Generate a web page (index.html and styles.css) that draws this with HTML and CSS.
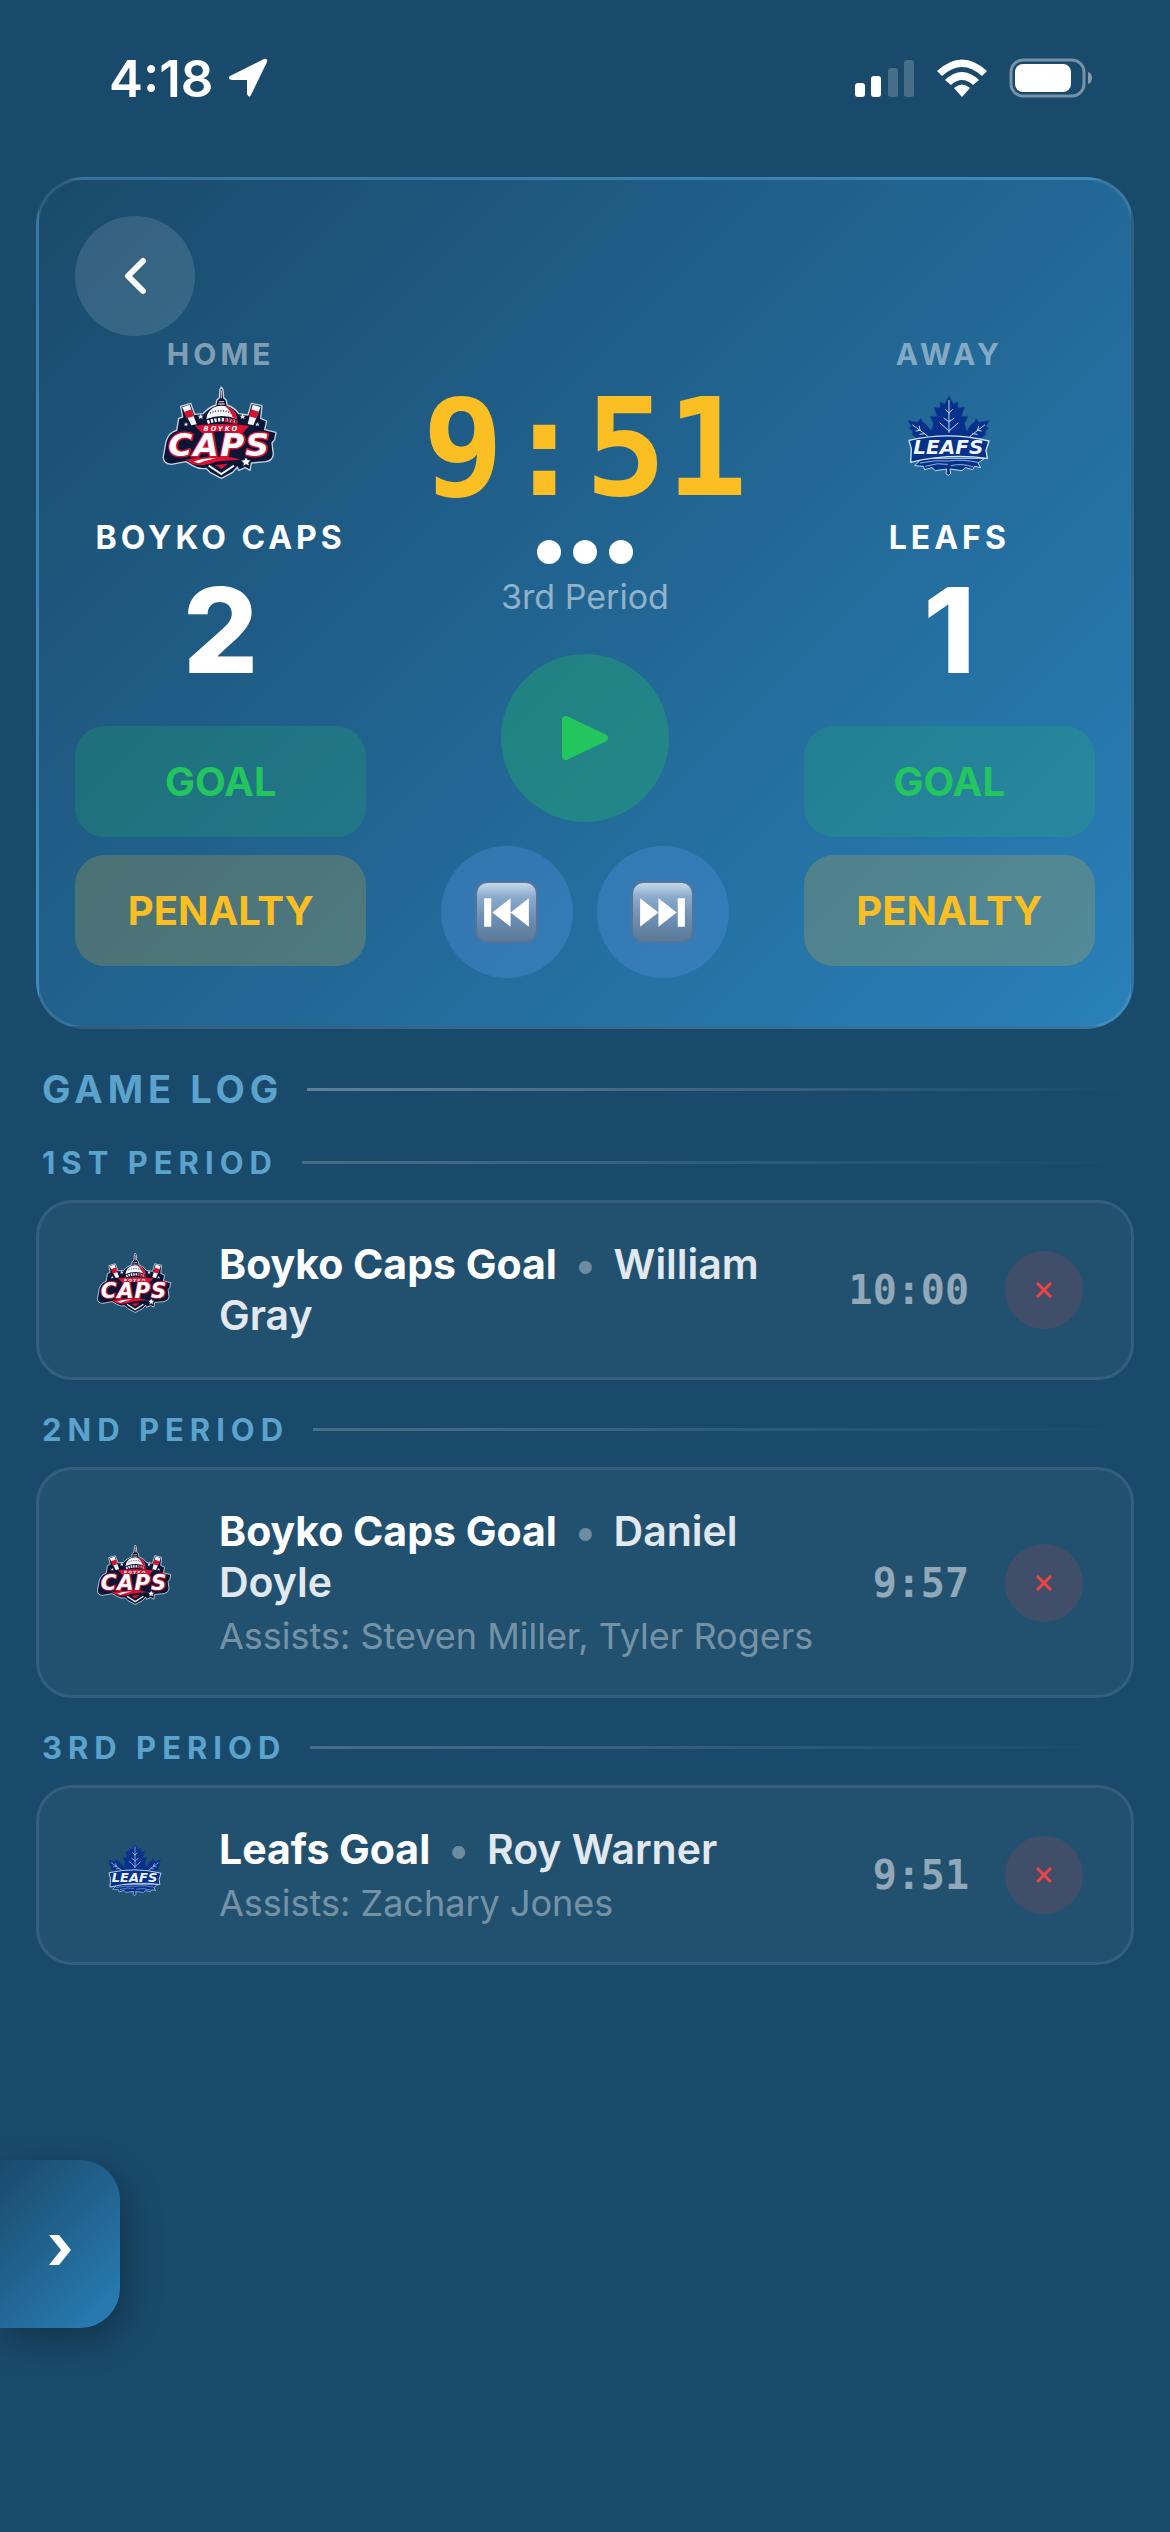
FILE: index.html
```html
<!DOCTYPE html>
<html lang="en">
<head>
    <meta charset="UTF-8">
    <meta name="viewport" content="width=device-width, initial-scale=1.0">
    <title>Hockey Scoreboard</title>
    <link rel="stylesheet" href="styles.css">
</head>
<body>
    <!-- Team logos, reused in the scoreboard and in the log -->
    <svg class="sprites" aria-hidden="true">
        <symbol id="logo-caps" viewBox="61 6 360 360">
            <path d="M242 48 L247 56 L249 80 L257 88 L259 102 Q282 110 294 128 L322 132 L332 97 L364 104 L360 142 L378 150 L372 176 L406 184 L402 206 L394 216 L398 250 Q396 268 376 272 L332 276 L328 298 L314 290 L294 298 L290 288 L276 304 L242 322 L208 304 L196 292 Q176 296 156 284 L136 272 L92 280 Q66 278 68 256 L76 212 Q84 184 108 178 L114 142 L126 138 L120 106 L150 97 L162 130 L188 128 Q202 110 226 102 L228 88 L236 80 L238 56 Z" fill="#0a1536" stroke="#c9d3e0" stroke-width="4" stroke-linejoin="round"/>
            <!-- sticks -->
            <path d="M124 109 L147 101 L168 160 L152 163 Z M336 101 L360 108 L338 163 L321 159 Z" fill="#f4f6fa"/>
            <path d="M130 123 L152 115 L159 136 L138 142 Z M331 115 L355 122 L347 142 L325 136 Z" fill="#d6122c"/>
            <path d="M180 128 l3 6 6 0 -5 4 2 6 -6 -3 -6 3 2 -6 -5 -4 6 0 Z M306 128 l3 6 6 0 -5 4 2 6 -6 -3 -6 3 2 -6 -5 -4 6 0 Z M136 153 l2 5 5 0 -4 3 2 5 -5 -3 -5 3 2 -5 -4 -3 5 0 Z M350 153 l2 5 5 0 -4 3 2 5 -5 -3 -5 3 2 -5 -4 -3 5 0 Z" fill="#dfe6f0"/>
            <!-- dome -->
            <path d="M240 58 h4 v24 h-4 Z M234 90 h16 v4 h-16 Z M232 97 h20 v4 h-20 Z" fill="#d8a8b4"/>
            <path d="M197 144 Q202 106 242 104 Q282 106 289 144 Q244 126 197 144 Z" fill="#f7f8fb"/>
            <path d="M252 105 Q284 110 290 145 L276 139 Q270 118 252 105 Z" fill="#e0142d"/>
            <path d="M208 126 Q242 112 278 128" fill="none" stroke="#39425f" stroke-width="5" stroke-dasharray="3 5"/>
            <path d="M200 154 Q243 138 288 154" fill="none" stroke="#f4f6fa" stroke-width="11" stroke-dasharray="7 4"/>
            <path d="M252 147 Q272 148 290 156" fill="none" stroke="#e0142d" stroke-width="11" stroke-dasharray="7 4"/>
            <!-- red banner -->
            <path d="M162 164 Q242 154 326 164 L306 186 Q242 176 184 186 Z" fill="#dc1030"/>
            <text class="logo-text" x="242" y="180" font-size="20" letter-spacing="6" text-anchor="middle" fill="#fff">BOYKO</text>
            <path d="M136 266 Q180 256 222 258 Q270 254 300 266 Q260 268 226 272 Q196 284 172 282 Q150 280 136 266 Z" fill="#dc1030"/>
            <path d="M158 272 Q190 260 226 262 Q196 268 174 277 Z" fill="#fff"/>
            <path d="M204 284 L242 309 L280 284" fill="none" stroke="#e9edf4" stroke-width="6"/>
            <path d="M224 282 L262 278 L242 294 Z" fill="#dc1030"/>
            <text class="logo-text" x="236" y="254" font-size="98" letter-spacing="4" text-anchor="middle" fill="#fbfcfe" stroke="#dc1030" stroke-width="9" stroke-linejoin="round" paint-order="stroke">CAPS</text>
            <path d="M316 256 l5 10 11 1 -8 8 3 11 -11 -5 -10 6 2 -11 -8 -8 11 -2 Z" fill="#fff" stroke="#0a1536" stroke-width="3"/>
        </symbol>

        <symbol id="logo-leafs" viewBox="31 6 360 360">
            <path d="M211 74 L224 98 L238 92 L238 110 L258 108 L248 136 L268 136 L258 158 L264 180 L276 162 L290 150 L292 142 L302 154 L332 148 L322 166 L330 172 L320 180 L322 190 L310 200 L112 200 L100 190 L102 180 L90 172 L98 166 L87 148 L116 154 L126 142 L130 150 L144 162 L158 178 L164 158 L154 136 L174 136 L166 108 L184 110 L184 92 L198 98 Z" fill="#05318a" stroke="#174f92" stroke-width="2"/>
            <g fill="none" stroke="#bfd4ef" stroke-width="3" stroke-linecap="round">
                <path d="M211 88 V184 M211 126 L201 116 M211 126 L221 116 M211 152 L196 142 M211 152 L226 142 M211 180 L184 156 M211 180 L238 156"/>
                <path d="M102 162 L148 196 M124 178 L112 180 M124 178 L122 166 M138 188 L124 190"/>
                <path d="M318 162 L274 196 M296 178 L308 180 M296 178 L300 166 M282 188 L296 190"/>
            </g>
            <path d="M98 262 L122 270 L108 284 L134 286 L138 296 L160 290 L170 299 L204 294 L202 308 L209 313 L216 308 L214 294 L250 299 L260 290 L282 296 L288 286 L306 290 L298 276 L318 262 Z" fill="#05318a" stroke="#c5d7ee" stroke-width="3" stroke-linejoin="round"/>
            <path d="M91 208 Q211 180 331 210 L322 238 L326 262 Q211 246 96 274 L98 234 Z" fill="#05318a" stroke="#d7e4f5" stroke-width="4" stroke-linejoin="round"/>
            <path d="M124 276 Q170 266 210 270 Q250 264 298 274 M140 286 Q176 274 208 280 M216 284 Q250 276 284 288" fill="none" stroke="#8fb4de" stroke-width="3"/>
            <text class="logo-text" x="209" y="249" font-size="60" text-anchor="middle" fill="#f3f8fe">LEAFS</text>
        </symbol>

        <symbol id="icon-delete" viewBox="0 0 16 16">
            <path d="M1 1 L15 15 M15 1 L1 15" fill="none" stroke="#ef4444" stroke-width="3"/>
        </symbol>
    </svg>

    <header class="status-bar">
        <div class="status-left">
            <span class="status-time">4:18</span>
            <svg class="location-icon" viewBox="0 0 40 40">
                <path d="M36 1 Q40 0 39 4 L23 37 Q21 41 19 36 L19 22 L4 22 Q-1 21 2 18 Z" fill="#fff"/>
            </svg>
        </div>
        <div class="status-right">
            <svg class="signal-icon" viewBox="0 0 60 38">
                <rect x="0" y="24" width="10" height="14" rx="3" fill="#fff"/>
                <rect x="16" y="17" width="10" height="21" rx="3" fill="#fff"/>
                <rect x="33" y="9" width="10" height="29" rx="3" fill="#fff" opacity="0.2"/>
                <rect x="49" y="1" width="10" height="37" rx="3" fill="#fff" opacity="0.2"/>
            </svg>
            <svg class="wifi-icon" viewBox="0 0 52 38">
                <path d="M1 12 Q26 -11 51 12 L46 17 Q26 -1 6 17 Z" fill="#fff"/>
                <path d="M9 21 Q26 5 43 21 L37 26 Q26 16 15 26 Z" fill="#fff"/>
                <path d="M18 29 Q26 22 34 29 L26 38 Z" fill="#fff"/>
            </svg>
            <svg class="battery-icon" viewBox="0 0 83 40">
                <rect x="2" y="2" width="73" height="36" rx="12" fill="none" stroke="#fff" stroke-width="3" opacity="0.4"/>
                <rect x="6" y="6" width="56" height="28" rx="8" fill="#fff"/>
                <path d="M79 14 Q83 15 83 20 Q83 25 79 26 Z" fill="#fff" opacity="0.45"/>
            </svg>
        </div>
    </header>

    <main class="game">
        <section class="scoreboard">
            <button class="back-btn" aria-label="Back">
                <svg viewBox="0 0 24 38"><path d="M20 4 L5 19 L20 34" fill="none" stroke="#fff" stroke-width="6" stroke-linecap="round" stroke-linejoin="round"/></svg>
            </button>

            <div class="board">
                <div class="team">
                    <div class="side">HOME</div>
                    <svg class="team-logo"><use href="#logo-caps"/></svg>
                    <div class="team-name">BOYKO CAPS</div>
                    <div class="score">2</div>
                    <div class="actions">
                        <button class="action-btn goal">GOAL</button>
                        <button class="action-btn penalty">PENALTY</button>
                    </div>
                </div>

                <div class="center">
                    <div class="clock">9:51</div>
                    <div class="dots"><span class="dot"></span><span class="dot"></span><span class="dot"></span></div>
                    <div class="period">3rd Period</div>
                    <button class="play-btn" aria-label="Start clock">
                        <svg viewBox="0 0 46 44"><path d="M4 4 L42 22 L4 40 Z" fill="#22c55e" stroke="#22c55e" stroke-width="8" stroke-linejoin="round"/></svg>
                    </button>
                    <div class="skip">
                        <button class="skip-btn" aria-label="Previous period">
                            <svg viewBox="0 0 62 61">
                                <linearGradient id="key-face" x1="0" y1="0" x2="0" y2="1">
                                    <stop offset="0" stop-color="#c9dcec"/>
                                    <stop offset="0.25" stop-color="#8aabcc"/>
                                    <stop offset="0.6" stop-color="#6c8fb4"/>
                                    <stop offset="1" stop-color="#5c7896"/>
                                </linearGradient>
                                <rect x="1" y="1" width="60" height="59" rx="11" fill="url(#key-face)" stroke="#54749a" stroke-width="2"/>
                                <path d="M9 17 h7 v28 h-7 Z M17 31 L35 17 V45 Z M35 31 L53 17 V45 Z" fill="#fff"/>
                            </svg>
                        </button>
                        <button class="skip-btn" aria-label="Next period">
                            <svg viewBox="0 0 62 61">
                                <rect x="1" y="1" width="60" height="59" rx="11" fill="url(#key-face)" stroke="#54749a" stroke-width="2"/>
                                <path d="M9 17 L27 31 L9 45 Z M27 17 L45 31 L27 45 Z M46 17 h7 v28 h-7 Z" fill="#fff"/>
                            </svg>
                        </button>
                    </div>
                </div>

                <div class="team">
                    <div class="side">AWAY</div>
                    <svg class="team-logo"><use href="#logo-leafs"/></svg>
                    <div class="team-name">LEAFS</div>
                    <div class="score">1</div>
                    <div class="actions">
                        <button class="action-btn goal">GOAL</button>
                        <button class="action-btn penalty">PENALTY</button>
                    </div>
                </div>
            </div>
        </section>

        <section class="log">
            <h2 class="log-title">GAME LOG</h2>

            <h3 class="period-title">1ST PERIOD</h3>
            <article class="event">
                <svg class="event-logo"><use href="#logo-caps"/></svg>
                <div class="event-text">
                    <div class="event-main"><strong>Boyko Caps Goal</strong><span class="sep">•</span>William Gray</div>
                </div>
                <time class="event-time">10:00</time>
                <button class="delete-btn" aria-label="Delete event"><svg><use href="#icon-delete"/></svg></button>
            </article>

            <h3 class="period-title">2ND PERIOD</h3>
            <article class="event">
                <svg class="event-logo"><use href="#logo-caps"/></svg>
                <div class="event-text">
                    <div class="event-main"><strong>Boyko Caps Goal</strong><span class="sep">•</span>Daniel Doyle</div>
                    <div class="assists">Assists: Steven Miller, Tyler Rogers</div>
                </div>
                <time class="event-time">9:57</time>
                <button class="delete-btn" aria-label="Delete event"><svg><use href="#icon-delete"/></svg></button>
            </article>

            <h3 class="period-title">3RD PERIOD</h3>
            <article class="event">
                <svg class="event-logo"><use href="#logo-leafs"/></svg>
                <div class="event-text">
                    <div class="event-main"><strong>Leafs Goal</strong><span class="sep">•</span>Roy Warner</div>
                    <div class="assists">Assists: Zachary Jones</div>
                </div>
                <time class="event-time">9:51</time>
                <button class="delete-btn" aria-label="Delete event"><svg><use href="#icon-delete"/></svg></button>
            </article>
        </section>
    </main>

    <button class="drawer-tab" aria-label="Open menu">
        <svg viewBox="0 0 22 30"><path d="M0 0 H10 L22 15 L10 30 H0 L12 15 Z" fill="#fff"/></svg>
    </button>
</body>
</html>
```
FILE: styles.css
```css
* {
    box-sizing: border-box;
}
body {
    margin: 0;
    min-height: 100vh;
    background: #1a4a6b;
    color: white;
    font-family: Inter, "Liberation Sans", sans-serif;
}
button {
    border: none;
    padding: 0;
    color: inherit;
    font-family: inherit;
    cursor: pointer;
}
.sprites {
    display: none;
}
.logo-text {
    font-family: "DejaVu Sans", sans-serif;
    font-weight: 700;
    font-style: italic;
}

/* Status bar */
.status-bar {
    display: flex;
    justify-content: space-between;
    align-items: center;
    height: 156px;
    padding: 0 78px 0 109px;
}
.status-left,
.status-right {
    display: flex;
    align-items: center;
}
.status-left {
    gap: 15px;
}
.status-right {
    gap: 21px;
}
.status-time {
    font-size: 51px;
    font-weight: 600;
}
.location-icon {
    width: 40px;
    height: 40px;
}
.signal-icon {
    width: 60px;
    height: 38px;
}
.wifi-icon {
    width: 52px;
    height: 38px;
}
.battery-icon {
    width: 83px;
    height: 40px;
}

.game {
    padding: 21px 36px;
}

/* Scoreboard */
.scoreboard {
    padding: 36px 36px 48px;
    border: 3px solid rgba(255, 255, 255, 0.1);
    border-radius: 48px;
    background: linear-gradient(135deg, #1a4a6b, #2980b9);
}
.back-btn {
    display: flex;
    align-items: center;
    justify-content: center;
    width: 120px;
    height: 120px;
    border-radius: 50%;
    background: rgba(255, 255, 255, 0.12);
}
.back-btn svg {
    width: 24px;
    height: 38px;
}
.board {
    display: grid;
    grid-template-columns: 2fr 3fr 2fr;
}
.team,
.center {
    display: flex;
    flex-direction: column;
    align-items: center;
}
.side {
    font-size: 30px;
    font-weight: 700;
    line-height: 37px;
    letter-spacing: 4px;
    color: rgba(255, 255, 255, 0.45);
}
.team-logo {
    width: 120px;
    height: 120px;
}
.team-name {
    margin-top: 23px;
    font-size: 32px;
    font-weight: 700;
    line-height: 44px;
    letter-spacing: 4px;
    white-space: nowrap;
}
.score {
    margin-top: 10px;
    font-size: 118px;
    font-weight: 800;
    line-height: 120px;
}
.actions {
    display: flex;
    flex-direction: column;
    gap: 18px;
    width: 100%;
    margin-top: 36px;
}
.action-btn {
    height: 111px;
    border-radius: 30px;
    font-size: 40px;
    font-weight: 700;
}
.goal {
    background: rgba(34, 197, 94, 0.2);
    color: #22c55e;
}
.penalty {
    background: rgba(251, 191, 36, 0.2);
    color: #fbbf24;
}
.clock {
    margin-top: 44px;
    font-family: "DejaVu Sans Mono", "Liberation Mono", monospace;
    font-size: 135px;
    font-weight: 700;
    line-height: 138px;
    color: #fbbf24;
}
.dots {
    display: flex;
    gap: 12px;
    margin-top: 22px;
}
.dot {
    width: 24px;
    height: 24px;
    border-radius: 50%;
    background: white;
}
.period {
    margin-top: 12px;
    font-size: 34px;
    line-height: 42px;
    color: rgba(255, 255, 255, 0.5);
}
.play-btn {
    display: flex;
    align-items: center;
    justify-content: center;
    width: 168px;
    height: 168px;
    margin-top: 36px;
    border-radius: 50%;
    background: rgba(34, 197, 94, 0.3);
}
.play-btn svg {
    width: 46px;
    height: 44px;
}
.skip {
    display: flex;
    gap: 24px;
    margin-top: 24px;
}
.skip-btn {
    display: flex;
    align-items: center;
    justify-content: center;
    width: 132px;
    height: 132px;
    border-radius: 50%;
    background: rgba(82, 146, 224, 0.35);
}
.skip-btn svg {
    width: 63px;
    height: 62px;
}

/* Game log */
.log-title,
.period-title {
    display: flex;
    align-items: center;
    gap: 24px;
    padding: 0 6px;
    font-weight: 700;
    color: #5ba3cc;
}
.log-title {
    margin: 36px 0 30px;
    font-size: 38px;
    line-height: 48px;
    letter-spacing: 5px;
}
.period-title {
    margin: 30px 0 18px;
    font-size: 31px;
    line-height: 39px;
    letter-spacing: 6px;
}
.log-title::after,
.period-title::after {
    content: "";
    flex: 1;
    height: 3px;
    background: linear-gradient(90deg, rgba(255, 255, 255, 0.2), transparent);
}
.log-title::after {
    background: linear-gradient(90deg, rgba(255, 255, 255, 0.3), transparent);
}
.event {
    display: flex;
    align-items: center;
    gap: 36px;
    padding: 36px 48px;
    border: 3px solid rgba(255, 255, 255, 0.08);
    border-radius: 36px;
    background: rgba(255, 255, 255, 0.04);
}
.event-logo {
    width: 96px;
    height: 93px;
    padding: 0 9px 15px;
}
.event-text {
    flex: 1;
}
.event-main {
    font-size: 41px;
    font-weight: 600;
    line-height: 51px;
    color: #e2e8f0;
}
.event-main strong {
    font-weight: 700;
    color: white;
}
.sep {
    margin: 0 18px;
    color: rgba(255, 255, 255, 0.35);
}
.assists {
    margin-top: 6px;
    font-size: 36px;
    line-height: 45px;
    color: rgba(255, 255, 255, 0.4);
}
.event-time {
    font-family: "DejaVu Sans Mono", "Liberation Mono", monospace;
    font-size: 40px;
    font-weight: 700;
    color: rgba(255, 255, 255, 0.5);
}
.delete-btn {
    display: flex;
    align-items: center;
    justify-content: center;
    width: 78px;
    height: 78px;
    border-radius: 50%;
    background: rgba(239, 68, 68, 0.15);
}
.delete-btn svg {
    width: 16px;
    height: 16px;
}

/* Floating tab on the left edge */
.drawer-tab {
    position: fixed;
    left: 0;
    bottom: 204px;
    display: flex;
    align-items: center;
    justify-content: center;
    width: 120px;
    height: 168px;
    padding-top: 12px;
    border-radius: 0 40px 40px 0;
    background: linear-gradient(135deg, #1a4a6b, #2980b9);
    box-shadow: 6px 12px 36px rgba(0, 0, 0, 0.3);
}
.drawer-tab svg {
    width: 22px;
    height: 30px;
}
```
